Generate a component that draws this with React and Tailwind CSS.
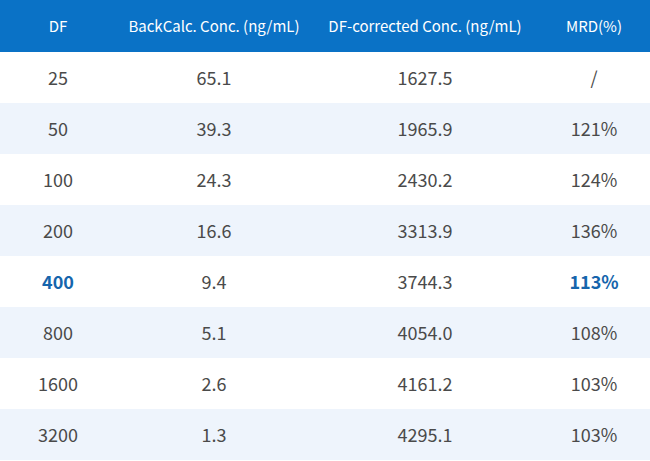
const rows = [
  { df: '25', back: '65.1', corr: '1627.5', mrd: '/' },
  { df: '50', back: '39.3', corr: '1965.9', mrd: '121%' },
  { df: '100', back: '24.3', corr: '2430.2', mrd: '124%' },
  { df: '200', back: '16.6', corr: '3313.9', mrd: '136%' },
  { df: '400', back: '9.4', corr: '3744.3', mrd: '113%', highlight: true },
  { df: '800', back: '5.1', corr: '4054.0', mrd: '108%' },
  { df: '1600', back: '2.6', corr: '4161.2', mrd: '103%' },
  { df: '3200', back: '1.3', corr: '4295.1', mrd: '103%' },
];

const cols = 'grid grid-cols-[116px_196px_226px_112px]';

export default function App() {
  return (
    <div
      className="w-[650px] h-[461px] bg-white overflow-hidden"
      style={{ fontFamily: '"Noto Sans CJK SC", "Noto Sans", sans-serif' }}
    >
      {/* header */}
      <div className={`${cols} h-[52px] items-center bg-[#0a72c6] text-white text-[15px]`}>
        <div className="text-center">DF</div>
        <div className="text-center">BackCalc. Conc. (ng/mL)</div>
        <div className="text-center">DF-corrected Conc. (ng/mL)</div>
        <div className="text-center">MRD(%)</div>
      </div>

      {/* rows */}
      {rows.map((r, i) => (
        <div
          key={r.df}
          className={`${cols} h-[51px] items-center text-[18px] text-[#4a4a4a] ${i % 2 === 1 ? 'bg-[#eef4fc]' : 'bg-white'}`}
        >
          <div className={`text-center ${r.highlight ? 'text-[#1565ac] font-bold' : ''}`}>{r.df}</div>
          <div className="text-center">{r.back}</div>
          <div className="text-center">{r.corr}</div>
          <div className={`text-center ${r.highlight ? 'text-[#1565ac] font-bold' : ''}`}>{r.mrd}</div>
        </div>
      ))}
    </div>
  );
}
